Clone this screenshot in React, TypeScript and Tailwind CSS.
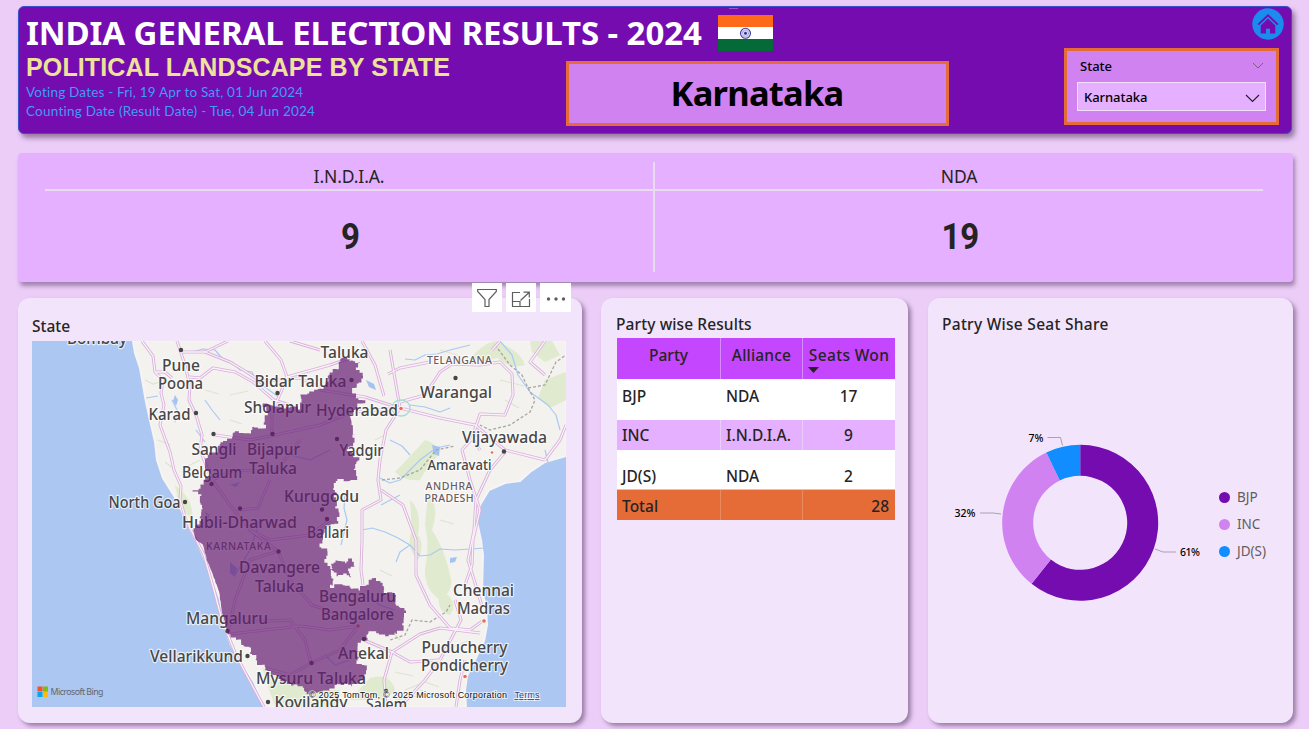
import type { ReactNode } from "react";

type Pt = [number, number];

function noise(seed: number) {
  let s = seed;
  return () => {
    s = (s * 1103515245 + 12345) % 2147483648;
    return s / 2147483648 - 0.5;
  };
}

/** Turns a coarse outline into a rugged, stepped border line. */
function rugged(points: Pt[], amp: number, seed: number, smoothFrom = -1, smoothTo = -1): string {
  const rnd = noise(seed);
  let path = `M${points[0][0]} ${points[0][1]}`;
  points.forEach((p, i) => {
    const q = points[(i + 1) % points.length];
    const len = Math.hypot(q[0] - p[0], q[1] - p[1]);
    const n = Math.max(1, Math.round(len / 2.6));
    const coast = i >= smoothFrom && i < smoothTo;
    const a = coast ? 0.8 : amp;
    for (let k = 0; k < n; k++) {
      const t = k / n;
      const x = (p[0] + (q[0] - p[0]) * t + rnd() * a).toFixed(1);
      const y = (p[1] + (q[1] - p[1]) * t + rnd() * a).toFixed(1);
      path += coast ? `L${x} ${y}` : rnd() > 0 ? `H${x}V${y}` : `V${y}H${x}`;
    }
  });
  return path + "Z";
}

const karnataka: Pt[] = [
  [228, 634], [222, 612], [219, 592], [213, 575], [207, 560], [203, 545], [196, 540], [193, 529],
  [200, 523], [202, 510], [201, 500], [202, 494], [193, 490], [204, 486], [205, 478], [212, 475],
  [204, 466], [204, 460], [210, 455], [219, 448], [224, 440], [233, 438], [232, 431], [242, 433],
  [248, 432], [253, 428], [266, 427], [265, 418], [269, 412], [264, 405], [272, 405], [284, 408],
  [299, 408], [301, 397], [311, 391], [319, 391], [327, 385], [329, 374], [337, 368], [341, 360],
  [346, 355], [349, 361], [359, 362], [357, 369], [363, 377], [357, 385], [353, 391], [356, 397],
  [364, 402], [356, 405], [356, 411], [351, 413], [349, 420], [354, 428], [353, 446], [348, 451],
  [358, 459], [355, 465], [356, 480], [338, 480], [333, 486], [335, 496], [336, 506], [339, 515],
  [338, 522], [328, 525], [325, 525], [324, 535], [320, 545], [329, 552], [324, 560], [332, 570],
  [331, 577], [334, 582], [330, 588], [342, 583], [358, 590], [363, 586], [370, 584], [372, 578],
  [377, 581], [384, 582], [383, 591], [396, 595], [397, 606], [406, 612], [402, 621], [403, 628],
  [393, 634], [386, 637], [375, 632], [367, 634], [366, 641], [359, 642], [359, 652], [357, 662],
  [367, 665], [365, 675], [364, 681], [356, 683], [352, 686], [348, 683], [338, 685], [324, 690],
  [318, 694], [308, 693], [298, 686], [286, 683], [278, 679], [267, 671], [256, 661], [250, 649], [240, 642], [231, 636],
];
const enclave: Pt[] = [
  [331, 564], [337, 561], [347, 563], [350, 559], [355, 566], [348, 569], [351, 578], [345, 574], [338, 576], [337, 573], [332, 571],
];
const karnatakaPath = rugged(karnataka, 3, 41, 0, 7);
const enclavePath = rugged(enclave, 1.4, 7);

const roads = [
  "M142 341L153 356L155 372L163 380L161 393L164 405L160 425L170 452L174 470L181 486L180 500L186 520L204 555L214 590L222 620L236 655L252 685L264 707",
  "M177 341L184 362L190 385L189 400L196 415L202 435L200 450L212 480L230 505L250 530L278 551L290 580L312 605L340 615L358 626",
  "M155 372L165 372L172 378M189 377L200 378L213 368L235 372L253 382L274 400L290 405",
  "M180 352L205 352L230 362L245 371L260 381L278 380L300 378L322 388",
  "M265 341L281 360L287 377L305 372L330 365L350 358M287 377L281 392L272 412L272 434",
  "M362 341L375 365L384 396M390 350L400 408M388 374L400 368L430 362",
  "M400 408L386 430L380 460L378 480L381 500L362 510L362 540L361 570L363 585",
  "M400 408L440 418L475 425L505 450L545 460M400 402L425 395L440 372L452 364L480 365L500 362L512 374L513 395L505 415L480 414L472 438L480 450",
  "M381 490L403 505L416 540L416 575L430 605L450 628L470 630L484 620",
  "M480 430L462 450L470 480L480 510L473 540L472 565L465 585",
  "M505 452L490 470L476 500L474 530L468 560L482 606",
  "M358 626L330 630L300 626L265 630L230 634M364 640L392 652L420 634L440 628L480 633M392 652L410 662L440 660",
  "M392 652L384 680L386 707M455 600L461 620L440 660L425 680L400 707M465 660L460 680L456 707",
  "M215 435L250 440L280 434L320 425L353 412L400 408M212 480L235 470L275 472L300 440M240 510L258 508L270 480",
  "M278 551L250 560L235 600L228 632M250 530L270 540L310 535L330 520M311 663L305 640L290 620L250 622M311 663L340 650L358 626M311 663L290 675L265 668",
  "M500 341L492 350M545 341L530 362L545 375",
  "M320 390L365 397L400 408M290 341L320 350M228 341L205 352M566 425L560 440L545 460",
];
const rivers = [
  "M192 352L203 349L215 350L222 358L232 362L240 370L252 372L256 380L262 385L280 398",
  "M405 359L415 360L425 355L437 354L450 350L470 345M410 405L425 407L440 412L450 408",
  "M500 341L512 355L518 375L530 392L548 405L556 415L560 430M545 450L548 462L553 478",
  "M380 478L390 483L400 480L412 468L420 460L436 448L450 445M381 505L400 495",
  "M362 530L372 528L385 532L398 538L410 545L420 556L430 555L440 549L455 550L485 548M410 545L400 552L396 562",
  "M345 495L344 508L347 520L341 545M260 520L250 550L235 575M390 440L402 446L410 455",
  "M146 398L158 396M172 400L178 412L175 422M395 610L382 606L372 600M290 455L310 460L330 450",
  "M205 400L212 410L220 420M196 430L205 442M350 660L335 665L325 655",
];
const hills = [
  "M495 341Q520 350 525 365Q510 370 498 358Q480 362 470 360Q480 345 495 341Z",
  "M530 341L552 341L560 355L545 362L532 352Z",
  "M545 380L566 372L566 400L550 408L538 398Z",
  "M425 440Q440 445 438 455Q425 470 420 480Q405 482 395 472Q405 462 425 440Z",
  "M410 500Q422 510 418 535Q425 545 418 560Q405 548 412 530Z",
  "M428 495Q440 505 432 530Q445 550 450 575Q455 590 440 600Q425 590 425 570Q430 545 425 525Z",
  "M440 590Q460 600 450 615Q435 612 440 590Z",
  "M262 668Q290 680 310 690L340 690L338 707L275 707Z",
  "M370 678Q390 672 395 690L385 700L350 700Z",
  "M175 485Q195 500 192 520L185 512L178 500Z",
];

type MapLabel = [string, number, number, number, number?];
const labels: MapLabel[] = [
  ["Bombay", 67, 343.5, 60], ["Pune", 162, 371, 38], ["Poona", 158, 389, 45], ["Karad", 148.5, 420, 42],
  ["Taluka", 320.5, 358, 48], ["Bidar Taluka", 254.5, 386.5, 92], ["Sholapur", 244, 413, 67],
  ["Hyderabad", 316, 416, 82], ["Warangal", 420, 398, 72], ["Vijayawada", 462, 443, 85],
  ["Yadgir", 339.5, 456, 44], ["Amaravati", 427.5, 469.5, 64, 13.5], ["Sangli", 191.5, 455, 45],
  ["Bijapur", 247, 455, 53], ["Taluka", 249, 474, 48], ["Belgaum", 182, 478, 60],
  ["North Goa", 108.5, 508, 72], ["Kurugodu", 284, 502, 75], ["Hubli-Dharwad", 182, 528, 115],
  ["Ballari", 307, 538, 42], ["Davangere", 239, 573, 81], ["Taluka", 255, 591.5, 49],
  ["Bengaluru", 319, 602, 77], ["Bangalore", 321, 620, 73], ["Chennai", 453, 595.5, 61],
  ["Madras", 457, 614, 53], ["Mangaluru", 186, 624, 82], ["Vellarikkund", 150, 662, 93],
  ["Anekal", 338, 659, 51], ["Puducherry", 421.5, 653, 86], ["Pondicherry", 421, 671, 87],
  ["Mysuru Taluka", 256, 684, 110], ["Kovilandy", 274.5, 708, 73], ["Salem", 366, 710, 41],
];
const regions: MapLabel[] = [
  ["TELANGANA", 427, 364, 65], ["ANDHRA", 425.5, 490, 47], ["PRADESH", 424.5, 502, 49], ["KARNATAKA", 206, 549.5, 65],
];
const cities: Pt[] = [
  [181, 350], [277.5, 393], [196, 413], [213.5, 434], [272.5, 434], [351.5, 380], [455.5, 378], [504, 451.5], [337, 439], [211.5, 484],
  [185, 502], [240, 508.5], [322, 509.5], [327, 519], [278.5, 551.5], [227.5, 631], [247.5, 656], [364, 639], [311.5, 663], [268, 702], [386, 691],
];

function StateMap() {
  return (
    <svg viewBox="32 341 534 366" className="block h-[366px] w-[534px]" fontFamily="'Noto Sans', sans-serif">
      <rect x="32" y="341" width="534" height="366" fill="#abc7f2" />
      <path
        d="M133 341L135 353L140 368L143 385L146 402L150 420L155 442L157 460L163 478L173 494L178 502L184 516L191 531L197 542L205 560L213 580L220 600L225 628L231 645L243 665L254 682L262 700L264 707L466 707L465 690L467 676L475 660L484 641L487 625L486 606L482 592L483 555L481 540L477 522L480 505L489 490L505 483L520 481L530 472L545 462L566 456V341Z"
        fill="#f3f2ee"
        stroke="#f7f4f3"
        strokeWidth="2"
      />
      <g fill="#d5e6b9" opacity=".6">
        {hills.map((d) => <path key={d} d={d} />)}
      </g>
      <g fill="none" stroke="#dfe3d2" strokeWidth="1.2">
        <path d="M145 380l8 4l6 -2M150 410l10 3M158 440l12 5M200 460l-12 6M405 690l20 -8l14 5M395 672l18 4M500 380l24 6M440 350l20 6M350 600l8 4M470 640l-20 8M165 462l10 8M205 390l14 4M230 395l18 -4M380 570l12 6M440 520l14 4M400 640l-8 -8M375 440l12 -6M395 700l22 -4M420 690l18 6M505 400l14 8M230 420l12 4" />
      </g>
      <g fill="none" stroke="#a9c9f4" strokeWidth="1.2" strokeLinejoin="round">
        {rivers.map((d) => <path key={d} d={d} />)}
      </g>
      <path d="M175 395l3 5l-2 6l-3 -5zM366 380l8 4l2 6l-7 -3zM432 445l8 2l-1 9l-5 -2zM450 558l7 -1l-2 5l-5 1zM230 562l7 6l-2 9l-5 -4zM205 512l5 3l-2 5zM230 485l10 -3l-4 5z" fill="#a3c3f3" />
      <g fill="none" stroke="#a6a6a3" strokeWidth="1.3" strokeDasharray="3 2">
        <path d="M495 345L510 365L522 375L528 388L545 385L556 362L566 355M528 388L535 400L530 412L510 425L490 430L480 425M382 480L400 478L420 470L436 450L455 446M390 640L405 635L412 620L430 622L446 612L450 605" />
      </g>
      <g fill="none" strokeLinejoin="round">
        <g stroke="#d9b0db" strokeWidth="3">
          {roads.map((d) => <path key={d} d={d} />)}
        </g>
        <g stroke="#faf1fa" strokeWidth="1.3">
          {roads.map((d) => <path key={d} d={d} />)}
        </g>
      </g>
      <ellipse cx="401" cy="408" rx="9" ry="8" fill="none" stroke="#a6dcd3" strokeWidth="1.4" />
      <g fill="#ea6b50" stroke="#fff" strokeWidth="1">
        <circle cx="401" cy="408.500" r="2.300" />
        <circle cx="492" cy="452.500" r="1.800" />
        <circle cx="358" cy="626" r="2.300" />
        <circle cx="484" cy="621" r="2.300" />
        <circle cx="465" cy="676.500" r="2.300" />
      </g>
      <g fill="#454545">
        {cities.map(([x, y]) => <circle key={`${x}-${y}`} cx={x} cy={y} r="2.200" />)}
      </g>
      <g fill="#474747" fontWeight="500" stroke="#ffffff" strokeWidth="2.4" strokeOpacity=".7" strokeLinejoin="round" paintOrder="stroke">
        {labels.map(([t, x, y, w, s]) => (
          <text key={`${t}${x}`} x={x} y={y} fontSize={s ?? 15.5} textLength={w} lengthAdjust="spacingAndGlyphs">{t}</text>
        ))}
        {regions.map(([t, x, y, w]) => (
          <text key={t} x={x} y={y} fontSize="10.500" fill="#6b5c62" textLength={w}>{t}</text>
        ))}
      </g>
      <g fill="#651c72" fillOpacity=".7">
        <path d={karnatakaPath} />
        <path d={enclavePath} />
      </g>
      <g>
        <rect x="37.500" y="686.500" width="5" height="5" fill="#f35325" />
        <rect x="43" y="686.500" width="5" height="5" fill="#81bc06" />
        <rect x="37.500" y="692" width="5" height="5" fill="#05a6f0" />
        <rect x="43" y="692" width="5" height="5" fill="#ffba08" />
        <text x="50.500" y="695" fontSize="8.800" fill="#62666d" textLength="53">Microsoft Bing</text>
      </g>
      <g fontFamily="'Liberation Sans', sans-serif" fontSize="9" stroke="#fff" strokeOpacity=".6" strokeWidth="2" paintOrder="stroke">
        <text x="309" y="698" fill="#111" textLength="198">© 2025 TomTom, © 2025 Microsoft Corporation</text>
        <text x="514.500" y="698" fill="#35439c" textLength="25" textDecoration="underline">Terms</text>
      </g>
    </svg>
  );
}

function Flag() {
  return (
    <svg viewBox="0 0 55 36" className="h-9 w-[55px]">
      <rect width="55" height="12" fill="#ff6a1a" />
      <rect y="12" width="55" height="12" fill="#fff" />
      <rect y="24" width="55" height="12" fill="#046a38" />
      <circle cx="27.500" cy="18.300" r="5" fill="#e6e6f6" stroke="#3c3ca0" strokeWidth="1.100" />
      <circle cx="27.500" cy="18.300" r="3" fill="none" stroke="#8a8acb" strokeWidth="1.500" strokeDasharray=".6 .6" />
      <circle cx="27.500" cy="18.300" r="1.500" fill="#30309a" />
    </svg>
  );
}

function HomeIcon() {
  return (
    <svg viewBox="0 0 32 32" className="size-8">
      <circle cx="16" cy="16" r="15.700" fill="#1a8cf0" />
      <path d="M6.200 16.600L16 7.200L25.800 16.600" fill="none" stroke="#750cb0" strokeWidth="1.900" />
      <path d="M8.700 17.600L16 10.600L23.300 17.600V25.400H18V20.800H14V25.400H8.700Z" fill="#750cb0" />
    </svg>
  );
}

function Header() {
  return (
    <header className="relative flex h-[128px] w-[1274px] rounded-md border border-[#3a50c8] bg-[#750cb0] shadow-[3px_4px_5px_rgba(70,40,80,0.5)]">
      <div className="w-[547px] shrink-0 pl-[7px]">
        <div className="flex h-[47px] w-[760px] items-center gap-[15px] pt-[5px]">
          <h1 className="w-[677px] pb-px font-['Noto_Sans'] text-[33px] leading-[42px] font-bold tracking-[-0.08px] whitespace-nowrap text-white">
            INDIA GENERAL ELECTION RESULTS - 2024
          </h1>
          <Flag />
        </div>
        <h2 className="font-['Liberation_Sans'] text-[25px] leading-[26px] font-bold tracking-[0.13px] whitespace-nowrap text-[#eee29a]">
          POLITICAL LANDSCAPE BY STATE
        </h2>
        <p className="pt-[3px] font-['Lato'] text-[13.5px] leading-[19px] tracking-[0.19px] text-[#3f9cf5]">
          Voting Dates - Fri, 19 Apr to Sat, 01 Jun 2024
        </p>
        <p className="font-['Lato'] text-[13.5px] leading-[19px] tracking-[0.23px] text-[#3f9cf5]">
          Counting Date (Result Date) - Tue, 04 Jun 2024
        </p>
      </div>
      <div className="mt-[54px] flex h-[65px] w-[383px] shrink-0 items-center justify-center border-[3px] border-[#e66c37] bg-[#d082f1] pr-px pb-[2px] font-['Noto_Sans'] text-[34.5px] font-bold tracking-[-0.75px] text-black">
        <span>Karnataka</span>
      </div>
      <div className="mt-[41px] ml-[115px] h-[77px] w-[215px] shrink-0 border-[3px] border-[#e66c37] bg-[#d082f1] px-[10px] pt-[5px] font-['Noto_Sans'] text-[13px] font-medium text-black">
        <div className="flex h-5 items-center justify-between pt-px pr-[2px] pl-[3px]">
          <span className="pt-px">State</span>
          <svg viewBox="0 0 12 7" className="-mt-[3px] h-[7px] w-3" fill="none" stroke="#755f7d"><path d="M1 1L6 6L11 1" /></svg>
        </div>
        <div className="mt-[6px] flex h-[29px] w-[189px] items-center justify-between border border-[#f3dffb] bg-[#e4b0ff] pr-[5px] pl-[6px]">
          <span className="pt-[3px] tracking-[-0.05px]">Karnataka</span>
          <svg viewBox="0 0 15 9" className="mt-[3px] h-[9px] w-[15px]" fill="none" stroke="#1f1f1f" strokeWidth="1.100"><path d="M1 1L7.500 7.500L14 1" /></svg>
        </div>
      </div>
      <span className="absolute top-px left-[710px] h-px w-[9px] bg-[#9a55c6]" />
      <button className="absolute top-[1px] right-[7px]" aria-label="Home"><HomeIcon /></button>
    </header>
  );
}

function AllianceCell({ name, seats }: { name: string; seats: number }) {
  return (
    <div className="flex flex-1 flex-col items-center text-[#252423]">
      <div className="h-[29px] w-full border-b-2 border-[#e8dcf0] text-center font-['Noto_Sans'] text-[17.5px] leading-[28px] tracking-[-0.1px]">{name}</div>
      <div className="scale-x-[0.88] pt-[22px] pl-[3px] font-['Roboto'] text-[37.5px] leading-[46px] font-bold">{seats}</div>
    </div>
  );
}

function Card({ className, children }: { className: string; children: ReactNode }) {
  return (
    <section className={`relative h-[425px] shrink-0 rounded-xl bg-[#f2e5fb] shadow-[3px_3px_4px_rgba(90,60,100,0.55)] ${className}`}>
      {children}
    </section>
  );
}

function Toolbar() {
  return (
    <div className="absolute top-[-15px] right-[11px] flex gap-1 text-[#605e5c]">
      <span className="flex h-[29px] w-[30px] items-center justify-center bg-white">
        <svg viewBox="0 0 20 20" className="size-5" fill="none" stroke="currentColor" strokeWidth="1.200"><path d="M.7 1.500H19.300V3.500L12 11.500V18.500H8V11.500L.7 3.500Z" /></svg>
      </span>
      <span className="flex h-[29px] w-[30px] items-center justify-center bg-white pt-1">
        <svg viewBox="0 0 20 17" className="h-[17px] w-5" fill="none" stroke="currentColor" strokeWidth="1.200"><path d="M9 1.500H1.500V15.500H18.500V8M1.500 10.500H9V15.500M9.500 9.500L18 1.500M12.500 1.200H18.300V6.500" /></svg>
      </span>
      <span className="flex h-[29px] w-[31px] items-center justify-center bg-white pt-[2px]">
        <svg viewBox="0 0 20 4" className="h-1 w-5" fill="currentColor"><circle cx="2.500" cy="2" r="1.700" /><circle cx="10" cy="2" r="1.700" /><circle cx="17.500" cy="2" r="1.700" /></svg>
      </span>
    </div>
  );
}

function ResultsTable() {
  return (
    <div className="grid w-[278px] grid-cols-[104px_82px_92px] font-['Noto_Sans'] text-[15.5px] font-medium text-[#252423]">
      <div className="h-[41px] border-r border-[#d98aff] bg-[#c546ff] pt-[5px] text-center leading-6">Party</div>
      <div className="h-[41px] border-r border-[#d98aff] bg-[#c546ff] pt-[5px] text-center leading-6 tracking-[0.2px]">Alliance</div>
      <div className="h-[41px] bg-[#c546ff] pt-[5px] text-center leading-6 tracking-[0.35px] whitespace-nowrap">
        Seats Won
        <svg viewBox="0 0 11 6" className="ml-[5px] h-[6px] w-[11px]" fill="#252423"><path d="M0 0H11L5.500 6Z" /></svg>
      </div>
      <div className="h-[41px] bg-white pl-[5px] leading-[34px]">BJP</div>
      <div className="h-[41px] bg-white pl-[5px] leading-[34px]">NDA</div>
      <div className="h-[41px] bg-white pr-px text-center leading-[34px]">17</div>
      <div className="h-[30px] border-r border-[#ecccfb] bg-[#e4b0ff] pl-[5px] leading-[30px]">INC</div>
      <div className="h-[30px] border-r border-[#ecccfb] bg-[#e4b0ff] pl-[5px] leading-[30px]">I.N.D.I.A.</div>
      <div className="h-[30px] bg-[#e4b0ff] pr-px text-center leading-[30px]">9</div>
      <div className="h-[40px] border-b border-[#d9c3bd] bg-white pt-[10px] pl-[5px] leading-[32px]">JD(S)</div>
      <div className="h-[40px] border-b border-[#d9c3bd] bg-white pt-[10px] pl-[5px] leading-[32px]">NDA</div>
      <div className="h-[40px] border-b border-[#d9c3bd] bg-white pt-[10px] pr-px text-center leading-[32px]">2</div>
      <div className="h-[30px] border-r border-[#ea8a5f] bg-[#e66c37] pl-[5px] leading-[32px]">Total</div>
      <div className="h-[30px] border-r border-[#ea8a5f] bg-[#e66c37]" />
      <div className="h-[30px] bg-[#e66c37] pr-[6px] text-right leading-[32px]">28</div>
    </div>
  );
}

const shares = [
  { party: "BJP", seats: 17, color: "#750cb0" },
  { party: "INC", seats: 9, color: "#d082f1" },
  { party: "JD(S)", seats: 2, color: "#118dff" },
];

function Donut() {
  const cx = 1080.2, cy = 522.8, R = 78, r = 47;
  let from = 0;
  const slices = shares.map((s) => {
    const a0 = from;
    const a1 = from + (s.seats / 28) * Math.PI * 2;
    from = a1;
    const pt = (a: number, rad: number) => `${cx + rad * Math.sin(a)} ${cy - rad * Math.cos(a)}`;
    const big = a1 - a0 > Math.PI ? 1 : 0;
    return { color: s.color, d: `M${pt(a0, R)}A${R} ${R} 0 ${big} 1 ${pt(a1, R)}L${pt(a1, r)}A${r} ${r} 0 ${big} 0 ${pt(a0, r)}Z` };
  });
  return (
    <svg viewBox="943 422 264 202" className="h-[202px] w-[264px] shrink-0">
      {slices.map((s) => <path key={s.color} d={s.d} fill={s.color} />)}
      <g fill="none" stroke="#a9a0b0" strokeWidth="1">
        <path d="M1047.500 437.500H1060.500L1062.500 445.500" />
        <path d="M980 513H993L1001 514" />
        <path d="M1155 549L1163 552H1176" />
      </g>
      <g fill="#000" fontFamily="'Noto Sans', sans-serif" fontSize="10.500" fontWeight="500">
        <text x="1028.500" y="441.500" textLength="15">7%</text>
        <text x="954.500" y="517" textLength="21">32%</text>
        <text x="1180" y="556" textLength="20">61%</text>
      </g>
    </svg>
  );
}

export default function App() {
  return (
    <main className="h-[729px] w-[1309px] overflow-hidden bg-[#ebcdf8] pt-[6px] pl-[18px]">
      <Header />
      <section className="mt-[19px] flex h-[129px] w-[1275px] rounded bg-[#e4b0ff] pt-[9px] pr-[30px] pl-[27px] shadow-[2px_4px_4px_rgba(90,60,100,0.5)]">
        <AllianceCell name="I.N.D.I.A." seats={9} />
        <div className="h-[110px] w-[2px] bg-[#e8dcf0]" />
        <AllianceCell name="NDA" seats={19} />
      </section>
      <div className="mt-4 flex">
        <Card className="w-[564px] pt-[15px] pl-[14px]">
          <h3 className="h-7 font-['Noto_Sans'] text-[15.5px] leading-[26px] font-medium text-[#252423]">State</h3>
          <StateMap />
          <Toolbar />
        </Card>
        <Card className="ml-[19px] w-[307px] pt-[13px] pl-[16px]">
          <h3 className="-ml-px h-[27px] font-['Noto_Sans'] text-[15.5px] leading-[26px] font-medium tracking-[0.1px] text-[#252423]">Party wise Results</h3>
          <ResultsTable />
        </Card>
        <Card className="ml-5 w-[365px] pt-[13px] pl-[15px]">
          <h3 className="-ml-px h-[27px] font-['Noto_Sans'] text-[15.5px] leading-[26px] font-medium tracking-[0.28px] text-[#252423]">Patry Wise Seat Share</h3>
          <div className="mt-[84px] flex">
            <Donut />
            <ul className="ml-[12px] flex flex-col pt-[62px] font-['Noto_Sans'] text-[13.5px] text-[#605e5c]">
              {shares.map((s) => (
                <li key={s.party} className="flex h-[27px] items-center gap-[7px]">
                  <svg viewBox="0 0 11 11" className="size-[11px]"><circle cx="5.500" cy="5.500" r="5.500" fill={s.color} /></svg>
                  {s.party}
                </li>
              ))}
            </ul>
          </div>
        </Card>
      </div>
    </main>
  );
}
